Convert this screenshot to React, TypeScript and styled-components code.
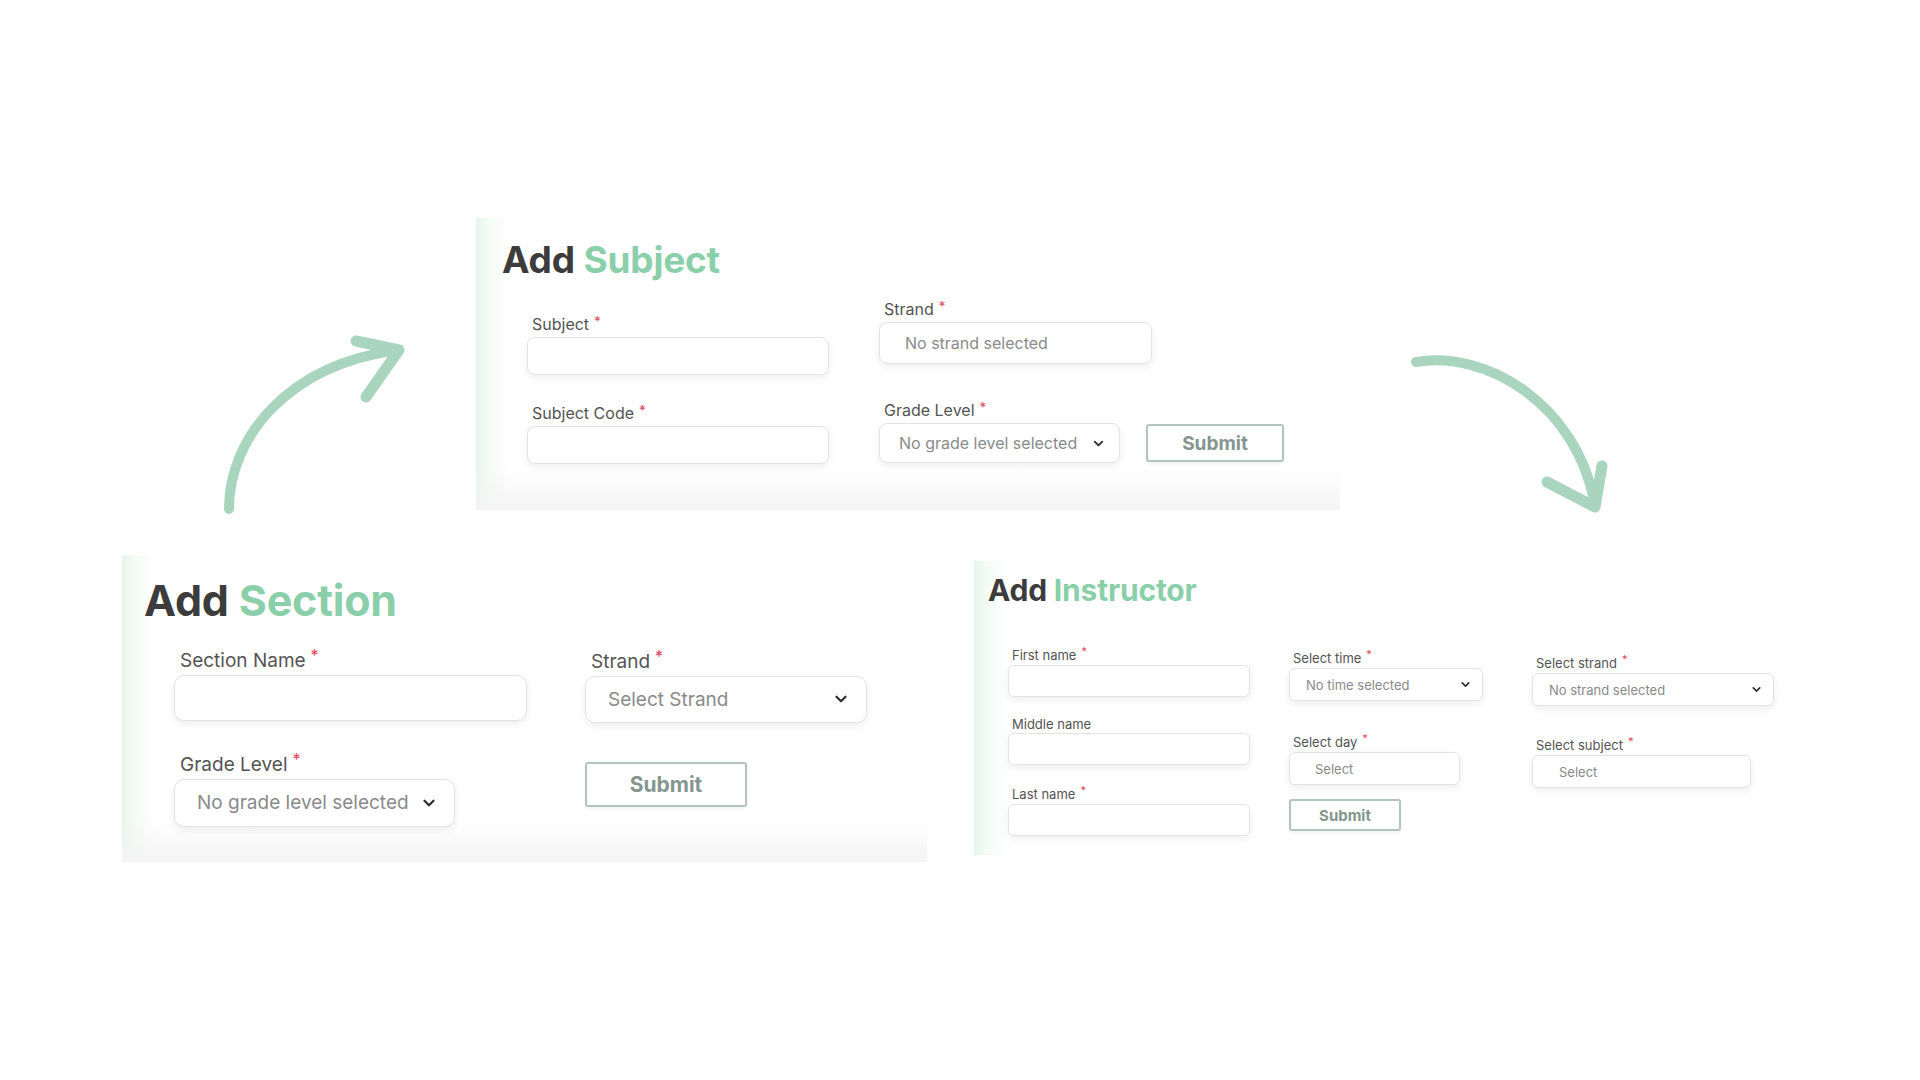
import React from 'react';
import styled, { createGlobalStyle, ThemeProvider, css } from 'styled-components';
import { ChevronDown } from 'lucide-react';

interface FormTheme {
  label: number;
  labelLine: number;
  labelIndent: number;
  text: number;
  radius: number;
  button: number;
  chevron: number;
}

const subjectTheme: FormTheme = { label: 16, labelLine: 20, labelIndent: 5, text: 16, radius: 8, button: 19, chevron: 15 };
const sectionTheme: FormTheme = { label: 19, labelLine: 24, labelIndent: 6, text: 19, radius: 10, button: 21, chevron: 18 };
const instructorTheme: FormTheme = { label: 13, labelLine: 16, labelIndent: 4, text: 13, radius: 6, button: 15, chevron: 13 };

const GlobalStyle = createGlobalStyle`
  html, body {
    margin: 0;
    padding: 0;
    background: #ffffff;
  }
  body {
    font-family: Inter, "Noto Sans", sans-serif;
    width: 1920px;
    height: 1080px;
    overflow: hidden;
  }
`;

const Canvas = styled.div`
  width: 1920px;
  height: 1080px;
  display: flex;
  flex-direction: column;
`;

const TopRow = styled.div`
  box-sizing: border-box;
  display: flex;
  align-items: flex-start;
  height: 510px;
  padding-top: 218px;
`;

const BottomRow = styled.div`
  display: flex;
  align-items: flex-start;
  margin-top: 45px;
  padding-left: 122px;
`;

const ArrowSvg = styled.svg<{ $left: number; $top: number }>`
  flex: none;
  margin-left: ${({ $left }) => $left}px;
  margin-top: ${({ $top }) => $top}px;
  overflow: visible;
`;

const Panel = styled.section<{ $w: number; $h: number; $shade?: boolean }>`
  box-sizing: border-box;
  flex: none;
  width: ${({ $w }) => $w}px;
  height: ${({ $h }) => $h}px;
  background: ${({ $shade }) =>
      $shade
        ? 'linear-gradient(to bottom, rgba(255,255,255,0) 86%, #f4f4f4 100%),'
        : ''}
    linear-gradient(to right, #e6f5eb 0px, #f3fbf5 12px, #ffffff 34px);
`;

const Title = styled.h2<{ $size: number }>`
  margin: 0;
  font-size: ${({ $size }) => $size}px;
  line-height: 1.2;
  font-weight: 700;
  color: #3c3c3c;
  letter-spacing: -0.2px;

  span {
    color: #8acfa9;
  }
`;

const FormRow = styled.div<{ $top: number; $left: number }>`
  display: flex;
  align-items: flex-start;
  margin-top: ${({ $top }) => $top}px;
  margin-left: ${({ $left }) => $left}px;
`;

const Column = styled.div<{ $gap?: number; $top?: number }>`
  display: flex;
  flex-direction: column;
  align-items: flex-start;
  margin-left: ${({ $gap = 0 }) => $gap}px;
  padding-top: ${({ $top = 0 }) => $top}px;
`;

const Inline = styled.div<{ $top?: number }>`
  display: flex;
  align-items: flex-end;
  gap: 26px;
  margin-top: ${({ $top = 0 }) => $top}px;
`;

const FieldWrap = styled.div<{ $top?: number }>`
  display: flex;
  flex-direction: column;
  margin-top: ${({ $top = 0 }) => $top}px;
`;

const Label = styled.label`
  ${({ theme }) => css`
    font-size: ${theme.label}px;
    line-height: ${theme.labelLine}px;
    padding-left: ${theme.labelIndent}px;
    margin-bottom: ${theme.label > 14 ? 2 : 1}px;
  `}
  color: #545454;
  white-space: nowrap;
`;

const Star = styled.span`
  color: #e2485a;
  font-size: 0.85em;
  margin-left: 5px;
  position: relative;
  top: -0.35em;
`;

const Box = styled.div<{ $w: number; $h: number; $pad?: number }>`
  box-sizing: border-box;
  width: ${({ $w }) => $w}px;
  height: ${({ $h }) => $h}px;
  display: flex;
  align-items: center;
  justify-content: space-between;
  padding-left: ${({ $pad = 20 }) => $pad}px;
  padding-right: ${({ $pad = 20 }) => Math.max(10, $pad - 6)}px;
  background: #ffffff;
  border: 1px solid #e3e3e3;
  border-radius: ${({ theme }) => theme.radius}px;
  box-shadow: 0 3px 9px rgba(0, 0, 0, 0.07);
  font-size: ${({ theme }) => theme.text}px;
  color: #8a8a8a;
  white-space: nowrap;
`;

const Chevron = styled(ChevronDown)`
  flex: none;
  color: #2f2f2f;
`;

const SubmitButton = styled.button<{ $w: number; $h: number; $top?: number }>`
  box-sizing: border-box;
  width: ${({ $w }) => $w}px;
  height: ${({ $h }) => $h}px;
  margin-top: ${({ $top = 0 }) => $top}px;
  background: #ffffff;
  border: 2px solid #b2c4be;
  border-radius: 3px;
  box-shadow: 0 2px 4px rgba(0, 0, 0, 0.06);
  font-family: Inter, "Noto Sans", sans-serif;
  font-size: ${({ theme }) => theme.button}px;
  font-weight: 700;
  color: #85958f;
  padding: 0;
`;

const ThemeCtx = React.createContext<FormTheme>(subjectTheme);

interface FieldProps {
  label: string;
  required?: boolean;
  w: number;
  h: number;
  top?: number;
  pad?: number;
  placeholder?: string;
  select?: boolean;
}

function Field({ label, required, w, h, top, pad, placeholder, select }: FieldProps) {
  const theme = React.useContext(ThemeCtx);
  return (
    <FieldWrap $top={top}>
      <Label>
        {label}
        {required && <Star>*</Star>}
      </Label>
      <Box $w={w} $h={h} $pad={pad}>
        <span>{placeholder}</span>
        {select && <Chevron size={theme.chevron} strokeWidth={3} />}
      </Box>
    </FieldWrap>
  );
}

function FormTheme({ theme, children }: { theme: FormTheme; children: React.ReactNode }) {
  return (
    <ThemeProvider theme={theme}>
      <ThemeCtx.Provider value={theme}>{children}</ThemeCtx.Provider>
    </ThemeProvider>
  );
}

function CurveUp() {
  return (
    <ArrowSvg $left={220} $top={117} width="190" height="185" viewBox="0 0 190 185">
      <g fill="none" stroke="#a9d5bf" strokeLinecap="round" strokeLinejoin="round">
        <path d="M9 174 C 9 104, 66 30, 178 15" strokeWidth="10" />
        <path d="M136 6 L 179 15 L 146 62" strokeWidth="11" />
      </g>
    </ArrowSvg>
  );
}

function CurveDown() {
  return (
    <ArrowSvg $left={65} $top={127} width="205" height="175" viewBox="0 0 205 175">
      <g fill="none" stroke="#a9d5bf" strokeLinecap="round" strokeLinejoin="round">
        <path d="M11 17 C 80 5, 172 58, 190 160" strokeWidth="10" />
        <path d="M142 137 L 190 162 L 197 121" strokeWidth="11" />
      </g>
    </ArrowSvg>
  );
}

function AddSubject() {
  return (
    <FormTheme theme={subjectTheme}>
      <Panel $w={864} $h={292} $shade style={{ marginLeft: 66, padding: '20px 0 0 26px' }}>
        <Title $size={37}>
          Add <span>Subject</span>
        </Title>
        <FormRow $top={17} $left={25}>
          <Column $top={15}>
            <Field label="Subject" required w={302} h={38} />
            <Field label="Subject Code" required w={302} h={38} top={28} />
          </Column>
          <Column $gap={50}>
            <Field label="Strand" required w={273} h={42} pad={25} placeholder="No strand selected" />
            <Inline $top={36}>
              <Field label="Grade Level" required w={241} h={40} pad={19} placeholder="No grade level selected" select />
              <SubmitButton $w={138} $h={38} style={{ marginBottom: 1 }}>
                Submit
              </SubmitButton>
            </Inline>
          </Column>
        </FormRow>
      </Panel>
    </FormTheme>
  );
}

function AddSection() {
  return (
    <FormTheme theme={sectionTheme}>
      <Panel $w={805} $h={307} $shade style={{ padding: '20px 0 0 22px' }}>
        <Title $size={43}>
          Add <span>Section</span>
        </Title>
        <FormRow $top={22} $left={30}>
          <Column>
            <Field label="Section Name" required w={353} h={46} />
            <Field label="Grade Level" required w={281} h={48} top={32} pad={22} placeholder="No grade level selected" select />
          </Column>
          <Column $gap={58} $top={1}>
            <Field label="Strand" required w={282} h={47} pad={22} placeholder="Select Strand" select />
            <SubmitButton $w={162} $h={45} $top={39}>
              Submit
            </SubmitButton>
          </Column>
        </FormRow>
      </Panel>
    </FormTheme>
  );
}

function AddInstructor() {
  return (
    <FormTheme theme={instructorTheme}>
      <Panel $w={830} $h={294} style={{ marginLeft: 47, marginTop: 6, padding: '11px 0 0 14px' }}>
        <Title $size={30}>
          Add <span>Instructor</span>
        </Title>
        <FormRow $top={39} $left={20}>
          <Column>
            <Field label="First name" required w={242} h={32} />
            <Field label="Middle name" w={242} h={32} top={19} />
            <Field label="Last name" required w={242} h={32} top={21} />
          </Column>
          <Column $gap={39} $top={3}>
            <Field label="Select time" required w={194} h={33} pad={16} placeholder="No time selected" select />
            <Field label="Select day" required w={171} h={33} top={33} pad={25} placeholder="Select" />
            <SubmitButton $w={112} $h={32} $top={14}>
              Submit
            </SubmitButton>
          </Column>
          <Column $gap={49} $top={8}>
            <Field label="Select strand" required w={242} h={33} pad={16} placeholder="No strand selected" select />
            <Field label="Select subject" required w={219} h={33} top={31} pad={26} placeholder="Select" />
          </Column>
        </FormRow>
      </Panel>
    </FormTheme>
  );
}

export default function App() {
  return (
    <>
      <GlobalStyle />
      <Canvas>
        <TopRow>
          <CurveUp />
          <AddSubject />
          <CurveDown />
        </TopRow>
        <BottomRow>
          <AddSection />
          <AddInstructor />
        </BottomRow>
      </Canvas>
    </>
  );
}
